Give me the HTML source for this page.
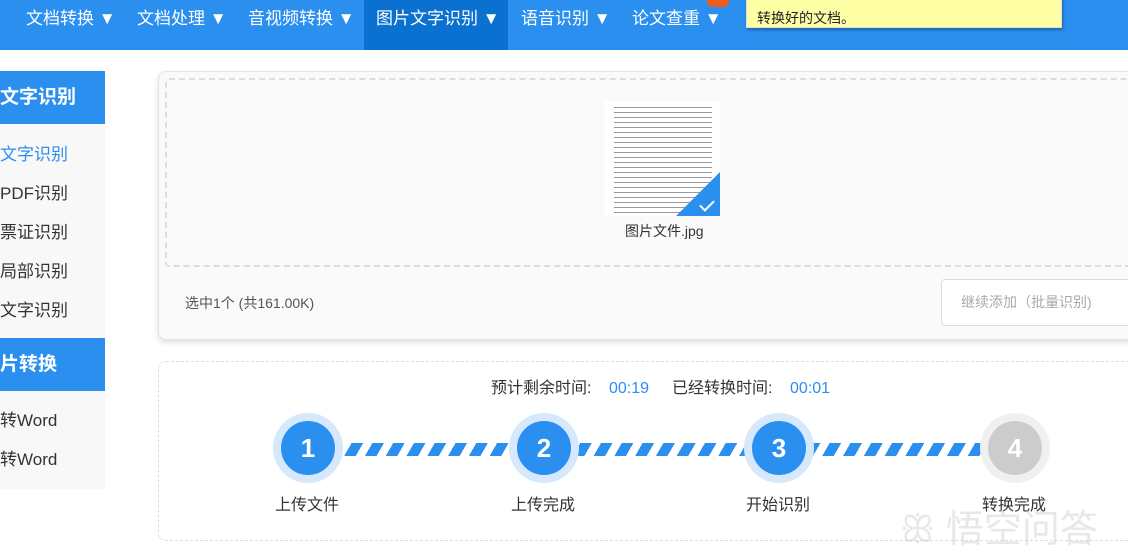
<!DOCTYPE html>
<html><head><meta charset="utf-8"><style>
*{margin:0;padding:0;box-sizing:border-box}
body{width:1128px;height:557px;overflow:hidden;background:#fff;font-family:"Liberation Sans","Noto Sans CJK SC",sans-serif;position:relative}
.nav{position:absolute;left:0;top:0;width:1128px;height:50px;background:#2b8fef}
.nav span{position:absolute;top:0;height:50px;line-height:38px;color:#fff;font-size:17px;white-space:nowrap}
.nav .act{background:#0b71d1;padding:0 12px}
.tip{position:absolute;left:746px;top:-4px;width:316px;height:32px;background:#ffffa6;border:1px solid #ddd;box-shadow:1px 2px 3px rgba(0,0,0,.3);font-size:14px;line-height:14px;padding:14px 0 0 10px;color:#222}
.badge{position:absolute;left:707px;top:-6px;width:22px;height:13px;background:#f05a1a;border-radius:6px}
.side{position:absolute;left:0;width:105px}
.sh{background:#2b8fef;color:#fff;font-weight:bold;font-size:19px;height:53px;line-height:53px}
.sl{background:#f8f8f8}
.sl div{height:39px;line-height:39px;font-size:17px;color:#333}
.card{position:absolute;left:158px;top:71px;width:990px;height:269px;background:#fafafa;border:1px solid #e3e3e3;border-radius:8px;box-shadow:0 3px 6px rgba(0,0,0,.12)}
.drop{position:absolute;left:6px;top:6px;width:980px;height:189px;border:2px dashed #ddd;border-radius:4px}
.card2{position:absolute;left:158px;top:361px;width:990px;height:180px;border:1px dashed #ddd;border-radius:8px}
.c{position:absolute;width:70px;height:70px;border-radius:50%;background:#d6e8fb}
.c b{position:absolute;left:8px;top:8px;width:54px;height:54px;border-radius:50%;background:#2b8fef;color:#fff;font-size:26px;text-align:center;line-height:54px}
.lbl{position:absolute;top:491px;font-size:16px;color:#333;white-space:nowrap}
.bar{position:absolute;top:443px;height:13px;background:repeating-linear-gradient(-60deg,#2b8fef 0 10px,#fff 10px 18px)}
.t{position:absolute;top:378px;height:22px;line-height:22px;font-size:16px;color:#333;white-space:nowrap}
</style></head><body>
<div class="nav">
<span style="left:26px">文档转换 ▼</span>
<span style="left:137px">文档处理 ▼</span>
<span style="left:248px">音视频转换 ▼</span>
<span class="act" style="left:364px;width:144px">图片文字识别 ▼</span>
<span style="left:521px">语音识别 ▼</span>
<span style="left:632px">论文查重 ▼</span>
</div>
<div class="badge"></div>
<div class="tip">转换好的文档。</div>
<div class="side" style="top:71px">
<div class="sh">文字识别</div>
<div class="sl" style="padding:11px 0 8px"><div style="color:#2b8fef">文字识别</div><div>PDF识别</div><div>票证识别</div><div>局部识别</div><div>文字识别</div></div>
<div class="sh">片转换</div>
<div class="sl" style="padding:10px 0 10px"><div>转Word</div><div>转Word</div></div>
</div>
<div class="card"><div class="drop"></div>
<div style="position:absolute;left:445px;top:29px;width:116px;height:115px;background:#fff;overflow:hidden">
<div style="position:absolute;left:10px;top:4px;width:98px;height:108px;background:repeating-linear-gradient(#fff 0 2px,#999 2px 3px,#fff 3px 5px)"></div>
<div style="position:absolute;right:0;bottom:0;width:0;height:0;border-left:44px solid transparent;border-bottom:44px solid #2b8fef"></div>
<div style="position:absolute;right:6px;bottom:8px;width:14px;height:8px;border-left:2px solid #fff;border-bottom:2px solid #fff;transform:rotate(-45deg)"></div>
</div>
<div style="position:absolute;left:466px;top:149px;font-size:14px;color:#333">图片文件.jpg</div>
<div style="position:absolute;left:26px;top:221px;font-size:14px;color:#555">选中1个 (共161.00K)</div>
<div style="position:absolute;left:782px;top:207px;width:200px;height:47px;border:1px solid #ddd;border-radius:4px;font-size:14px;color:#aaa;line-height:45px;padding-left:19px;background:#fff">继续添加（批量识别)</div>
</div>
<div class="card2"></div>
<div class="t" style="left:491px">预计剩余时间:</div>
<div class="t" style="left:609px;color:#2b8fef">00:19</div>
<div class="t" style="left:672px">已经转换时间:</div>
<div class="t" style="left:790px;color:#2b8fef">00:01</div>
<div class="bar" style="left:330px;width:670px"></div>
<div class="c" style="left:273px;top:413px"><b>1</b></div>
<div class="c" style="left:509px;top:413px"><b>2</b></div>
<div class="c" style="left:744px;top:413px"><b>3</b></div>
<div class="c" style="left:980px;top:413px;background:#f0f0f0"><b style="background:#ccc">4</b></div>
<div class="lbl" style="left:275px">上传文件</div>
<div class="lbl" style="left:511px">上传完成</div>
<div class="lbl" style="left:746px">开始识别</div>
<div class="lbl" style="left:982px">转换完成</div>
<div style="position:absolute;left:900px;top:498px;font-size:38px;color:rgba(210,210,210,.5);white-space:nowrap">ꕥ 悟空问答</div>
</body></html>
